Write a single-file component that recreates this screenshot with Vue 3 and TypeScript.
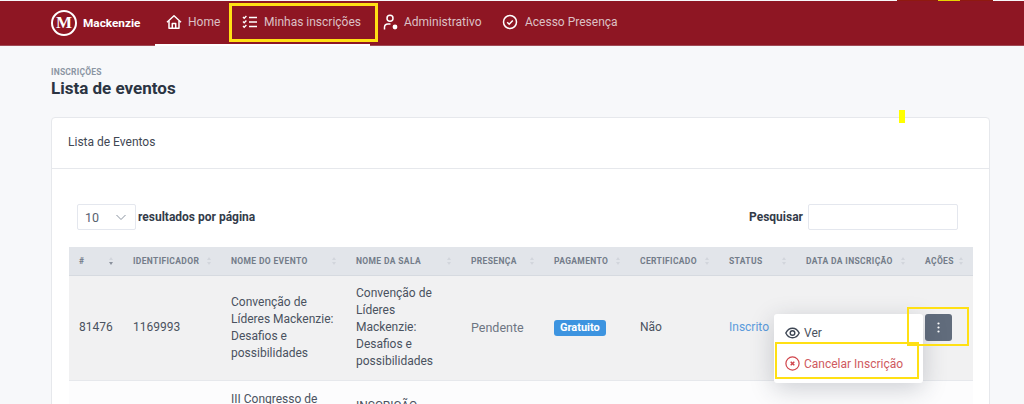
<script setup lang="ts">
interface Col { label: string; width: number }
const cols: Col[] = [
  { label: '#', width: 54 },
  { label: 'Identificador', width: 98 },
  { label: 'Nome do evento', width: 125 },
  { label: 'Nome da sala', width: 115 },
  { label: 'Presença', width: 83 },
  { label: 'Pagamento', width: 86 },
  { label: 'Certificado', width: 89 },
  { label: 'Status', width: 77 },
  { label: 'Data da inscrição', width: 119 },
  { label: 'Ações', width: 58 },
]
</script>

<template>
  <div class="page">
    <header class="nav">
      <div class="brand">
        <span class="logo">M</span>
        <span class="brand-name">Mackenzie</span>
      </div>
      <nav class="menu">
        <a class="item item-home">
          <svg width="16" height="16" viewBox="0 0 16 16" fill="none" stroke="currentColor" stroke-width="1.5" stroke-linejoin="round"><path d="M1 8.200 8 1.800l7 6.400"/><path d="M3 7v7.200h10V7"/><path d="M6.300 14.200V9.600h3.400v4.600"/></svg>
          Home
        </a>
        <a class="item item-mine">
          <svg width="16" height="16" viewBox="0 0 16 16" fill="none" stroke="currentColor" stroke-width="1.4"><path d="M7 3.500h8M7 8h8M7 12.500h8"/><path d="m1 3 1.200 1.200L4.400 2M1 7.500l1.200 1.200 2.200-2.200M1 12l1.200 1.200 2.200-2.200"/></svg>
          Minhas inscrições
        </a>
        <a class="item item-admin">
          <svg width="16" height="17" viewBox="0 0 16 17" fill="none" stroke="currentColor" stroke-width="1.5"><circle cx="7" cy="4.200" r="3"/><path d="M1.500 15.500v-2.200c0-2 1.600-3.300 3.500-3.300h2.500"/><circle cx="12" cy="13" r="2.400" fill="currentColor" stroke="none"/></svg>
          Administrativo
        </a>
        <a class="item item-pres">
          <svg width="16" height="16" viewBox="0 0 16 16" fill="none" stroke="currentColor" stroke-width="1.5"><circle cx="8" cy="8" r="6.500"/><path d="m5.200 8.200 2 2 3.600-3.800"/></svg>
          Acesso Presença
        </a>
      </nav>
    </header>

    <main class="content">
      <div class="crumb">INSCRIÇÕES</div>
      <h1 class="title">Lista de eventos</h1>

      <section class="card">
        <div class="card-head">Lista de Eventos</div>
        <div class="card-body">
          <div class="controls">
            <label class="length">
              <span class="select">
                10
                <svg width="12" height="7" viewBox="0 0 12 7" fill="none" stroke="#8a93a0" stroke-width="1"><path d="m1.500 1 4.500 4.500L10.500 1"/></svg>
              </span>
              resultados por página
            </label>
            <label class="search">
              Pesquisar
              <span class="input"></span>
            </label>
          </div>

          <table class="table">
            <colgroup>
              <col v-for="c in cols" :key="c.label" :style="{ width: c.width + 'px' }" />
            </colgroup>
            <thead>
              <tr>
                <th v-for="c in cols" :key="c.label">
                  <span class="th-in">
                    {{ c.label }}
                    <span class="sort" :class="{ desc: c.label === '#' }"><i></i><b></b></span>
                  </span>
                </th>
              </tr>
            </thead>
            <tbody>
              <tr class="row-active">
                <td>81476</td>
                <td>1169993</td>
                <td>Convenção de Líderes Mackenzie: Desafios e possibilidades</td>
                <td>Convenção de Líderes Mackenzie: Desafios e possibilidades</td>
                <td class="muted">Pendente</td>
                <td><span class="badge">Gratuito</span></td>
                <td>Não</td>
                <td class="link">Inscrito</td>
                <td></td>
                <td>
                  <button class="dots" type="button" aria-label="Ações">
                    <svg width="3" height="11" viewBox="0 0 3 11" fill="#fff"><circle cx="1.500" cy="1.500" r="1.100"/><circle cx="1.500" cy="5.500" r="1.100"/><circle cx="1.500" cy="9.500" r="1.100"/></svg>
                  </button>
                </td>
              </tr>
              <tr class="row-next">
                <td></td>
                <td></td>
                <td>III Congresso de</td>
                <td class="row-next-room">INSCRIÇÃO</td>
                <td></td><td></td><td></td><td></td><td></td><td></td>
              </tr>
            </tbody>
          </table>
        </div>
      </section>
    </main>

    <div class="dropdown">
      <a class="dd-item dd-view">
        <svg width="15" height="12" viewBox="0 0 15 12" fill="none" stroke="#3d4654" stroke-width="1.400"><path d="M.8 6C2.400 2.800 4.700 1.200 7.500 1.200S12.600 2.800 14.200 6c-1.600 3.200-3.900 4.800-6.700 4.800S2.400 9.200.8 6Z"/><circle cx="7.500" cy="6" r="2.300"/></svg>
        Ver
      </a>
      <a class="dd-item dd-cancel">
        <svg width="15" height="15" viewBox="0 0 15 15" fill="none" stroke="#d0454c" stroke-width="1.200"><circle cx="7.500" cy="7.500" r="6.600"/><path stroke-width="1.500" d="m5.700 5.700 3.600 3.600m0-3.600L5.700 9.300"/></svg>
        Cancelar Inscrição
      </a>
    </div>

    <span class="mark mark-mine"></span>
    <span class="mark mark-actions"></span>
    <span class="mark mark-cancel"></span>
    <span class="tick"></span>
    <span class="top-glow"><i></i></span>
  </div>
</template>

<style>
html, body { margin: 0; height: 404px; overflow: hidden; background: #f7f8fa; }
</style>

<style scoped>
.page {
  position: relative;
  width: 1024px;
  height: 404px;
  overflow: hidden;
  background: #f7f8fa;
  font-family: Roboto, "Liberation Sans", sans-serif;
  color: #3f4754;
  font-size: 13px;
}
.nav {
  display: flex;
  align-items: center;
  height: 44px;
  margin-top: 1px;
  padding-left: 51px;
  background: #8e1623;
  box-shadow: 0 1px 0 #a04a55;
}
.brand { display: flex; align-items: center; width: 104px; }
.logo {
  box-sizing: border-box;
  width: 26px;
  height: 26px;
  border: 2.500px solid #fff;
  border-radius: 50%;
  display: flex;
  align-items: center;
  justify-content: center;
  font-family: "Liberation Serif", serif;
  font-weight: 700;
  font-size: 17px;
  color: #fff;
  margin-right: 6px;
}
.brand-name { color: #fff; font-weight: 700; font-size: 11.800px; }
.menu { display: flex; height: 46px; }
.item {
  display: flex;
  align-items: center;
  box-sizing: border-box;
  color: #dcc0c5;
  font-size: 12px;
  height: 44px;
  white-space: nowrap;
}
.item svg { color: #fff; flex: none; }
.item-home { width: 74px; padding-left: 11px; gap: 6px; }
.item-mine { width: 141px; padding-left: 13px; gap: 6px; }
.item-admin { width: 132px; padding-left: 13px; gap: 5px; }
.item-pres { gap: 7px; }
.content { padding: 23px 34px 0 51px; }
.crumb { font-size: 8.500px; font-weight: 700; color: #8b95a3; letter-spacing: .2px; line-height: 9px; }
.title { margin: 0; font-size: 17px; font-weight: 700; line-height: 22px; color: #2b3442; }
.card {
  width: 939px;
  margin-top: 18px;
  height: 320px;
  background: #fff;
  border: 1px solid #e6e8ec;
  border-radius: 4px;
  box-sizing: border-box;
}
.card-head {
  height: 50px;
  line-height: 49px;
  padding-left: 16px;
  font-size: 12px;
  color: #3f4754;
  border-bottom: 1px solid #e6e8ec;
}
.card-body { padding: 35px 17px 0; }
.controls { display: flex; justify-content: space-between; align-items: center; padding: 0 14px 0 8px; height: 26px; margin-bottom: 17px; }
.length, .search { display: flex; align-items: center; font-size: 12px; font-weight: 700; color: #333b49; }
.select {
  box-sizing: border-box;
  width: 59px;
  height: 26px;
  margin-right: 2px;
  padding: 0 8px 0 7px;
  display: flex;
  align-items: center;
  justify-content: space-between;
  border: 1px solid #e4e7ee;
  border-radius: 2px;
  font-weight: 400;
  color: #59626f;
  font-size: 12.500px;
}
.input {
  box-sizing: border-box;
  width: 150px;
  height: 26px;
  margin-left: 5px;
  border: 1px solid #e4e7ee;
  border-radius: 2px;
}
.table { border-collapse: collapse; table-layout: fixed; width: 904px; }
th {
  height: 28px;
  padding: 0 0 0 10px;
  background: #e2e5ea;
  border-bottom: 1px solid #d6dae0;
  text-align: left;
  font-size: 8.500px;
  font-weight: 700;
  letter-spacing: .35px;
  text-transform: uppercase;
  color: #737c89;
  box-sizing: border-box;
  white-space: nowrap;
}
.th-in { display: flex; align-items: center; justify-content: space-between; padding-right: 10px; }
.sort { display: flex; flex-direction: column; gap: 2px; }
.sort i, .sort b { display: block; width: 0; height: 0; border-left: 2.500px solid transparent; border-right: 2.500px solid transparent; }
.sort i { border-bottom: 3px solid #d2d6dc; }
.sort b { border-top: 3px solid #d2d6dc; }
.sort.desc b { border-top-color: #8a919c; }
td {
  padding: 0 10px;
  font-size: 12px;
  line-height: 17px;
  color: #4a5260;
  vertical-align: middle;
}
.row-active { height: 105px; background: #f1f1f2; border-bottom: 1px solid #e6e8ec; }
.row-next { background: #fcfcfd; height: 60px; }
.row-next td { vertical-align: top; padding-top: 10px; }
.row-next td.row-next-room { padding-top: 17px; }
td.muted { color: #6d7582; font-size: 12.500px; }
td.link { color: #5b9bdc; }
.badge {
  display: inline-block;
  padding: 0 6px;
  height: 16px;
  line-height: 16px;
  border-radius: 3px;
  background: #3d94e0;
  color: #fff;
  font-size: 11px;
  font-weight: 700;
}
.dots {
  display: flex;
  align-items: center;
  justify-content: center;
  width: 27px;
  height: 27px;
  margin: 0;
  padding: 0;
  border: 0;
  border-radius: 3px;
  background: #616c7c;
}
.dropdown {
  position: absolute;
  left: 774px;
  top: 314px;
  box-sizing: border-box;
  width: 149px;
  height: 69px;
  background: #fff;
  border-radius: 3px;
  box-shadow: 0 6px 24px rgba(40, 50, 70, .22);
}
.dd-item {
  position: absolute;
  left: 11px;
  display: flex;
  align-items: center;
  gap: 4px;
  font-size: 12px;
  white-space: nowrap;
}
.dd-view { top: 12px; color: #4a5260; }
.dd-cancel { top: 42px; color: #cf5a60; }
.mark { position: absolute; box-sizing: border-box; border: 2px solid #ffe014; }
.mark-mine { left: 229px; top: 3px; width: 149px; height: 39px; border-width: 3px; }
.mark-actions { left: 907px; top: 307px; width: 62px; height: 39px; }
.mark-cancel { left: 775px; top: 342px; width: 144px; height: 37px; }
.tick { position: absolute; left: 899px; top: 110px; width: 6px; height: 13px; background: #ffff00; }
.top-glow { position: absolute; left: 897px; top: 0; width: 96px; height: 1px; background: #8f1a10; }
.top-glow i { position: absolute; left: 41px; top: 0; width: 22px; height: 1px; background: #e8d400; }
.nav::after {
  content: "";
  position: absolute;
  left: 155px;
  top: 44px;
  width: 215px;
  height: 2px;
  background: #fff;
}
</style>
